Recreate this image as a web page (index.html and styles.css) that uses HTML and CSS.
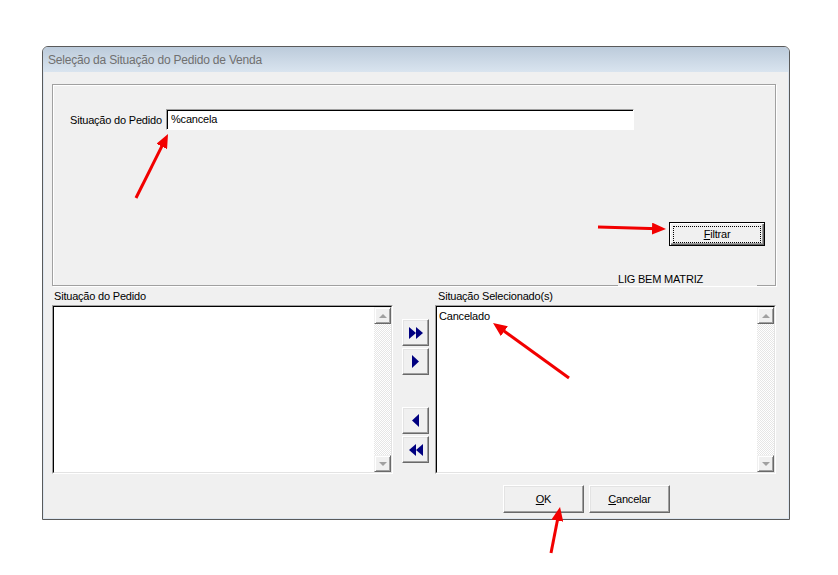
FILE: index.html
```html
<!doctype html>
<html lang="pt">
<head>
<meta charset="utf-8">
<title>Seleção da Situação do Pedido de Venda</title>
<link rel="stylesheet" href="styles.css">
</head>
<body>
<div class="screen">
	<div class="dialog">
		<div class="caption">Seleção da Situação do Pedido de Venda</div>
		<div class="client">
			<div class="group">
				<div class="search">
					<label>Situação do Pedido</label>
					<div class="edit">%cancela</div>
				</div>
				<div class="filter">
					<button class="btn btn-default btn-filter"><span class="focus"><u>F</u>iltrar</span></button>
				</div>
				<span class="company">LIG BEM MATRIZ</span>
			</div>

			<div class="lists">
				<div class="col">
					<div class="col-label">Situação do Pedido</div>
					<div class="listbox">
						<div class="listbox-in">
							<div class="items"></div>
							<div class="vscroll">
								<span class="sb-btn"><i class="tri tri-up"></i></span>
								<span class="sb-track"></span>
								<span class="sb-btn"><i class="tri tri-down"></i></span>
							</div>
						</div>
					</div>
				</div>

				<div class="movers">
					<button class="btn mv">
						<svg width="14" height="12" viewBox="0 0 14 12"><polygon points="0,0 7,6 0,12"/><polygon points="7,0 14,6 7,12"/></svg>
					</button>
					<button class="btn mv">
						<svg width="7" height="13" viewBox="0 0 7 13"><polygon points="0,0 7,6.5 0,13"/></svg>
					</button>
					<button class="btn mv mv-back">
						<svg width="7" height="13" viewBox="0 0 7 13"><polygon points="7,0 0,6.5 7,13"/></svg>
					</button>
					<button class="btn mv">
						<svg width="14" height="12" viewBox="0 0 14 12"><polygon points="7,0 0,6 7,12"/><polygon points="14,0 7,6 14,12"/></svg>
					</button>
				</div>

				<div class="col">
					<div class="col-label col-label-r">Situação Selecionado(s)</div>
					<div class="listbox">
						<div class="listbox-in">
							<div class="items">
								<div class="item">Cancelado</div>
							</div>
							<div class="vscroll">
								<span class="sb-btn"><i class="tri tri-up"></i></span>
								<span class="sb-track"></span>
								<span class="sb-btn"><i class="tri tri-down"></i></span>
							</div>
						</div>
					</div>
				</div>
			</div>

			<div class="actions">
				<button class="btn btn-ok"><u>O</u>K</button>
				<button class="btn btn-ok"><u>C</u>ancelar</button>
			</div>
		</div>
	</div>
</div>

<!-- setas vermelhas de anotação por cima da janela -->
<svg class="marks" width="838" height="575" viewBox="0 0 838 575">
	<defs>
		<marker id="head" markerUnits="userSpaceOnUse" markerWidth="14" markerHeight="12" refX="6" refY="6" orient="auto">
			<path d="M0 0 L14 6 L0 12 Z" fill="#f20000"/>
		</marker>
	</defs>
	<line x1="136" y1="198" x2="164.4" y2="141.2" marker-end="url(#head)"/>
	<line x1="598" y1="227" x2="658" y2="228.8" marker-end="url(#head)"/>
	<line x1="569" y1="378" x2="499.5" y2="327.7" marker-end="url(#head)"/>
	<line x1="551" y1="553" x2="558.5" y2="514.8" marker-end="url(#head)"/>
</svg>
</body>
</html>
```

FILE: styles.css
```css
html,body{margin:0;padding:0}
body{background:#fff;font:11px "Liberation Sans",Arial,sans-serif;letter-spacing:-0.2px;color:#000}
button{font:inherit;letter-spacing:inherit;color:inherit;padding:0;margin:0;cursor:default}

.screen{padding:46px 0 0 42px}
.dialog{width:748px;height:474px;box-sizing:border-box;border:1px solid #5a5a5a;border-radius:6px 6px 0 0;background:#f0f0f0;box-shadow:inset 0 0 0 1px #dde6f0;overflow:hidden}
.caption{height:25px;line-height:27px;padding-left:5px;font-size:12px;color:#707070;background:linear-gradient(#bccbdb,#d9e4ef)}
.client{padding:12px 0 0 9px}

/* quadro de cima */
.group{position:relative;width:724px;height:202px;box-sizing:border-box;border:1px solid #a0a0a0;box-shadow:1px 1px 0 #fff,inset 1px 1px 0 #fff;padding:24px 10px 0 17px}
.search{display:flex;align-items:center}
.search label{width:96px}
.edit{width:468px;height:21px;box-sizing:border-box;background:#fff;border:1px solid;border-color:#a0a0a0 #fff #fff #a0a0a0;box-shadow:inset 1px 1px 0 #000;padding-left:4px;line-height:19px}
.filter{display:flex;justify-content:flex-end;margin-top:92px}
.company{position:absolute;left:565px;bottom:-1px;width:139px;height:14px;line-height:14px;background:#f0f0f0}

/* botões */
.btn{display:flex;align-items:center;justify-content:center;box-sizing:border-box;background:#f0f0f0;border:1px solid;border-color:#fff #696969 #696969 #fff;box-shadow:inset -1px -1px 0 #a0a0a0,inset 1px 1px 0 #e3e3e3}
.btn-default{border:1px solid #000;box-shadow:inset 1px 1px 0 #fff,inset -1px -1px 0 #696969,inset -2px -2px 0 #a0a0a0}
.btn-filter{width:96px;height:24px}
.focus{display:block;width:86px;height:15px;line-height:14px;border:1px dotted #000;text-align:center}
.btn-ok{width:81px;height:28px}

/* listas */
.lists{display:flex;margin-top:3px}
.col{width:341px}
.col-label{height:16px;line-height:14px;padding-left:2px}
.col-label-r{padding-left:3px}
.listbox{height:169px;box-sizing:border-box;border:1px solid;border-color:#a0a0a0 #fff #fff #a0a0a0}
.listbox-in{height:100%;box-sizing:border-box;border:1px solid;border-color:#000 #e3e3e3 #e3e3e3 #000;background:#fff;display:flex}
.items{flex:1;padding:2px 2px 0 2px}
.item{line-height:14px}
.vscroll{width:17px;display:flex;flex-direction:column;background:repeating-conic-gradient(#fff 0 25%,#e6e6e6 0 50%) 0 0/2px 2px}
.sb-btn{height:17px;box-sizing:border-box;background:#f0f0f0;border:1px solid;border-color:#f0f0f0 #696969 #696969 #f0f0f0;box-shadow:inset 1px 1px 0 #fff,inset -1px -1px 0 #a0a0a0;display:flex;align-items:center;justify-content:center}
.sb-track{flex:1}
.tri{display:block;width:0;height:0;border-left:4px solid transparent;border-right:4px solid transparent}
.tri-up{border-bottom:4px solid #a0a0a0}
.tri-down{border-top:4px solid #a0a0a0}

.movers{width:27px;margin:0 6px 0 9px;padding-top:30px;display:flex;flex-direction:column;gap:2px}
.mv{width:27px;height:27px}
.mv svg{fill:#000080;display:block}
.mv-back{margin-top:30px}

.actions{display:flex;gap:5px;padding-left:451px;margin-top:11px}

/* anotações */
.marks{position:absolute;left:0;top:0;pointer-events:none}
.marks line{stroke:#f20000;stroke-width:3}
```
